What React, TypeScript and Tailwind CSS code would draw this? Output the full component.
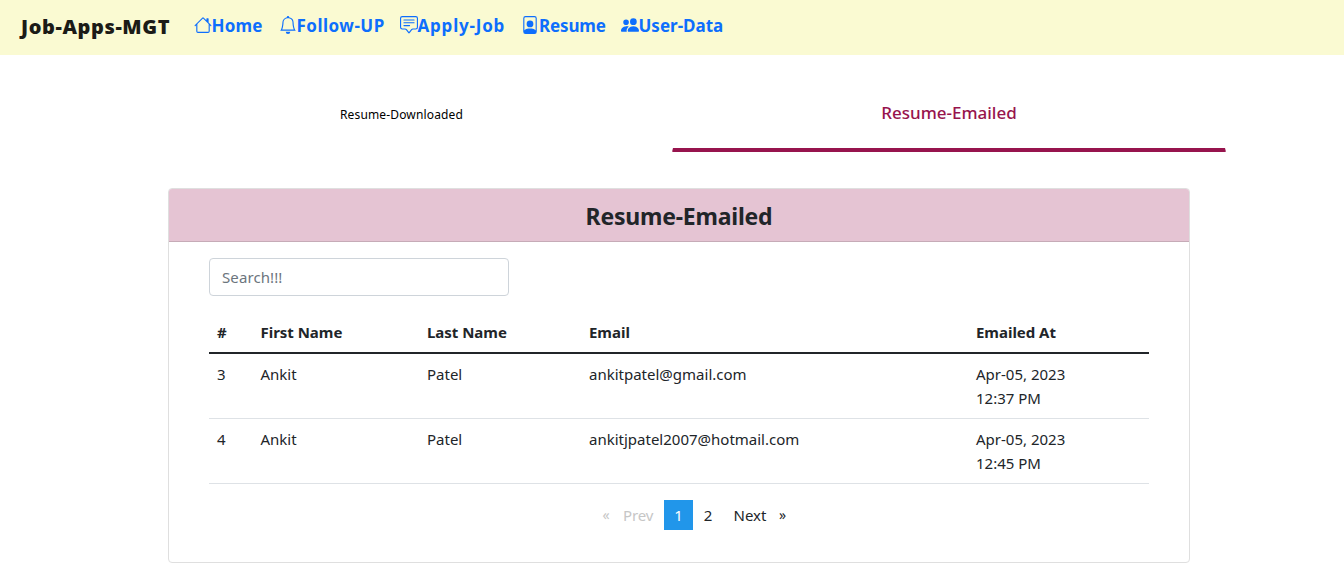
import { BsBell, BsChatSquareText, BsFilePerson, BsHouse, BsPeopleFill } from "react-icons/bs";

const links = [
  { label: "Home", Icon: BsHouse, box: "w-[85px]", text: "tracking-[0.15px]" },
  { label: "Follow-UP", Icon: BsBell, box: "w-[121px]", text: "tracking-[0.5px]" },
  { label: "Apply-Job", Icon: BsChatSquareText, box: "w-[121.5px]", text: "tracking-[0.8px]" },
  { label: "Resume", Icon: BsFilePerson, box: "w-[99.5px]", text: "tracking-[-0.15px]" },
  { label: "User-Data", Icon: BsPeopleFill, box: "w-[104px]", text: "tracking-[0px]" },
];

const columns = ["#", "First Name", "Last Name", "Email", "Emailed At"];

const rows = [
  { id: 3, first: "Ankit", last: "Patel", email: "ankitpatel@gmail.com", date: "Apr-05, 2023", time: "12:37 PM" },
  { id: 4, first: "Ankit", last: "Patel", email: "ankitjpatel2007@hotmail.com", date: "Apr-05, 2023", time: "12:45 PM" },
];

const grid = "grid grid-cols-[43.5px_166.5px_162px_387px_181px]";

function Navbar() {
  return (
    <nav className="flex h-[55px] items-center bg-[#fafad2] pl-[21px]">
      <span className="w-[172.5px] pb-[2px] font-['Open_Sans',sans-serif] text-[20px] leading-[30px] font-extrabold tracking-[0.6px] text-[#1b1b17]">
        Job-Apps-MGT
      </span>
      {links.map(({ label, Icon, box, text }) => (
        <a key={label} href="#" className={`flex h-[54px] items-center pb-[3px] text-[17px] font-bold text-[#0d6efd] ${box}`}>
          <Icon className="mb-[2px] size-[18px] shrink-0" />
          <span className={`whitespace-nowrap ${text}`}>{label}</span>
        </a>
      ))}
    </nav>
  );
}

function Tabs() {
  return (
    <div className="mt-[21px] ml-[131px] flex h-[76px] w-[1095px]">
      <button className="w-[541px] pt-px text-[12px] tracking-[0.15px] text-black">Resume-Downloaded</button>
      <button className="w-[554px] rounded-[1px] border-x border-b-4 border-x-transparent border-b-[#97144d] pt-[2px] text-[17px] font-medium text-[#97144d]">
        Resume-Emailed
      </button>
    </div>
  );
}

function Pagination() {
  return (
    <div className="mt-4 flex h-[30px] pl-[384px] leading-[30px]">
      <span className="w-[30px] pl-[9.5px] text-[14px] text-[#c6c6c6]">«</span>
      <span className="w-[41px] tracking-[-0.1px] text-[#c6c6c6]">Prev</span>
      <span className="w-[29px] bg-[#2196ea] text-center text-white">1</span>
      <span className="w-[30px] text-center">2</span>
      <span className="w-[56px] pl-[10.5px]">Next</span>
      <span className="text-[14px]">»</span>
    </div>
  );
}

export default function App() {
  return (
    <div className="h-[567px] w-[1344px] overflow-hidden bg-white font-['Noto_Sans','Open_Sans',sans-serif] text-[15px] leading-6 text-[#212529]">
      <Navbar />
      <Tabs />
      <section className="mt-9 ml-[168px] h-[375px] w-[1022px] rounded border border-[#dfdfdf]">
        <header className="flex h-[53px] items-center justify-center rounded-t-[3px] border-b border-[#c6abb7] bg-[#e5c4d3] pt-px">
          <h1 className="text-[23px] font-bold tracking-[-0.22px]">Resume-Emailed</h1>
        </header>
        <div className="px-10 pt-4">
          <input
            placeholder="Search!!!"
            className="block h-[38px] w-[300px] rounded border border-[#ced4da] px-3 text-[15px] tracking-[0.1px] placeholder:text-[#6c757d]"
          />
          <div className="mt-4 w-[940px]">
            <div className={`${grid} h-[42px] border-b-2 border-[#212529] pt-2 font-bold tracking-[-0.03px]`}>
              {columns.map((name) => (
                <div key={name} className="px-2">{name}</div>
              ))}
            </div>
            {rows.map((row) => (
              <div key={row.id} className={`${grid} h-[65px] border-b border-[#dee2e6] pt-2`}>
                <div className="px-2">{row.id}</div>
                <div className="px-2">{row.first}</div>
                <div className="px-2">{row.last}</div>
                <div className="px-2">{row.email}</div>
                <div className="px-2">
                  {row.date}
                  <br />
                  {row.time}
                </div>
              </div>
            ))}
          </div>
          <Pagination />
        </div>
      </section>
    </div>
  );
}
